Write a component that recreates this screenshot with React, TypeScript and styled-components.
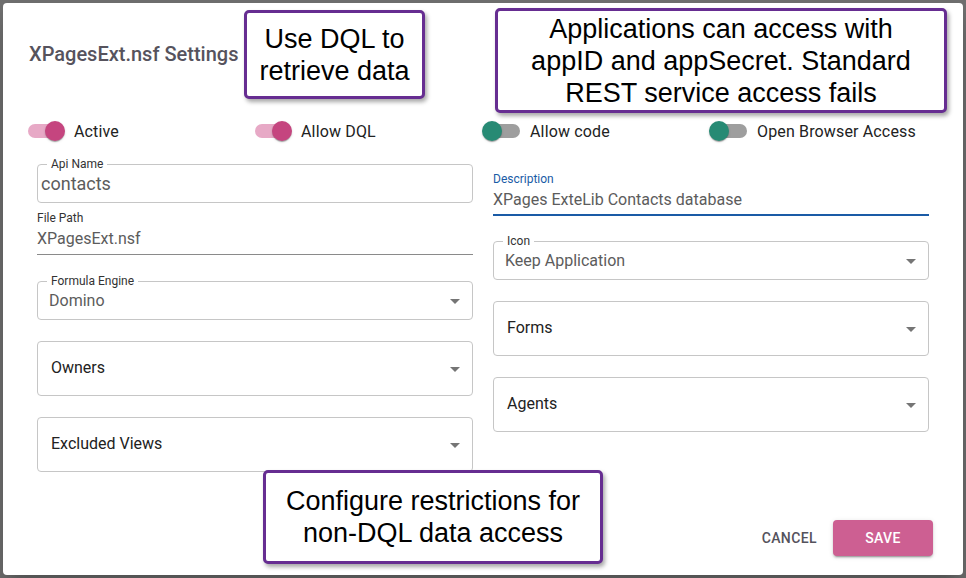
import React from "react";
import styled, { createGlobalStyle } from "styled-components";

const GlobalStyle = createGlobalStyle`
  html, body {
    margin: 0;
    padding: 0;
    background: #6f6f6f;
    font-family: Roboto, "Noto Sans", sans-serif;
  }
  * {
    box-sizing: border-box;
  }
`;

type ToggleItem = { label: string; on: boolean };

const toggles: ToggleItem[] = [
  { label: "Active", on: true },
  { label: "Allow DQL", on: true },
  { label: "Allow code", on: false },
  { label: "Open Browser Access", on: false },
];

const ArrowDrop = () => (
  <svg width="24" height="24" viewBox="0 0 24 24">
    <path d="M7 10l5 5 5-5z" fill="rgba(0,0,0,0.54)" />
  </svg>
);

const App = () => {
  return (
    <Page>
      <GlobalStyle />
      <Dialog>
        <Title>XPagesExt.nsf Settings</Title>

        <ToggleRow>
          {toggles.map((t) => (
            <ToggleCell key={t.label}>
              <Switch>
                <Track $on={t.on} />
                <Thumb $on={t.on} />
              </Switch>
              <ToggleLabel $on={t.on}>{t.label}</ToggleLabel>
            </ToggleCell>
          ))}
        </ToggleRow>

        <Fields>
          <Column>
            <Outlined $height={39}>
              <Notch>Api Name</Notch>
              <Value $big>contacts</Value>
            </Outlined>
            <Standard $mt={8}>
              <SmallLabel>File Path</SmallLabel>
              <Value>XPagesExt.nsf</Value>
            </Standard>
            <Outlined $height={39} $mt={26}>
              <Notch>Formula Engine</Notch>
              <Value>Domino</Value>
              <ArrowDrop />
            </Outlined>
            <Outlined $height={55} $mt={21}>
              <Placeholder>Owners</Placeholder>
              <ArrowDrop />
            </Outlined>
            <Outlined $height={55} $mt={21}>
              <Placeholder>Excluded Views</Placeholder>
              <ArrowDrop />
            </Outlined>
          </Column>

          <Column>
            <Standard $mt={8} $focused>
              <SmallLabel $focused>Description</SmallLabel>
              <Value>XPages ExteLib Contacts database</Value>
            </Standard>
            <Outlined $height={39} $mt={25}>
              <Notch>Icon</Notch>
              <Value>Keep Application</Value>
              <ArrowDrop />
            </Outlined>
            <Outlined $height={55} $mt={21}>
              <Placeholder>Forms</Placeholder>
              <ArrowDrop />
            </Outlined>
            <Outlined $height={55} $mt={21}>
              <Placeholder>Agents</Placeholder>
              <ArrowDrop />
            </Outlined>
          </Column>
        </Fields>

        <Footer>
          <TextButton>Cancel</TextButton>
          <SaveButton>Save</SaveButton>
        </Footer>
      </Dialog>

      <Callout $left={244} $top={10} $width={181} $height={89}>
        Use DQL to
        <br />
        retrieve data
      </Callout>
      <Callout $left={495} $top={8} $width={452} $height={105}>
        Applications can access with
        <br />
        appID and appSecret. Standard
        <br />
        REST service access fails
      </Callout>
      <Callout $left={263} $top={470} $width={340} $height={94}>
        Configure restrictions for
        <br />
        non-DQL data access
      </Callout>
    </Page>
  );
};

const Page = styled.div`
  position: relative;
  width: 966px;
  height: 578px;
  padding: 3px;
  overflow: hidden;
`;

const Dialog = styled.div`
  width: 960px;
  height: 572px;
  background: #fff;
  border-radius: 4px;
  display: flex;
  flex-direction: column;
  box-shadow: 0 11px 15px -7px rgba(0, 0, 0, 0.2),
    0 24px 38px 3px rgba(0, 0, 0, 0.14);
`;

const Title = styled.h2`
  margin: 37px 0 0 26px;
  font-size: 20px;
  font-weight: 500;
  line-height: 28px;
  color: #56535d;
`;

const ToggleRow = styled.div`
  margin-top: 49px;
  padding-left: 25px;
  display: grid;
  grid-template-columns: repeat(4, 227px);
`;

const ToggleCell = styled.div`
  display: flex;
  align-items: center;
  height: 28px;
`;

const Switch = styled.span`
  position: relative;
  width: 38px;
  height: 20px;
  flex-shrink: 0;
`;

const Track = styled.span<{ $on: boolean }>`
  position: absolute;
  left: ${(p) => (p.$on ? "0" : "3px")};
  top: 3px;
  width: 35px;
  height: 14px;
  border-radius: 7px;
  background: ${(p) => (p.$on ? "#e7a9c6" : "#9e9e9e")};
`;

const Thumb = styled.span<{ $on: boolean }>`
  position: absolute;
  top: 0;
  left: ${(p) => (p.$on ? "17px" : "0")};
  width: 20px;
  height: 20px;
  border-radius: 50%;
  background: ${(p) => (p.$on ? "#c5457f" : "#278a74")};
  box-shadow: 0 2px 1px -1px rgba(0, 0, 0, 0.2),
    0 1px 1px 0 rgba(0, 0, 0, 0.14), 0 1px 3px 0 rgba(0, 0, 0, 0.12);
`;

const ToggleLabel = styled.span<{ $on: boolean }>`
  margin-left: ${(p) => (p.$on ? "8px" : "10px")};
  font-size: 16px;
  letter-spacing: 0.15px;
  color: #222;
`;

const Fields = styled.div`
  margin-top: 19px;
  padding: 0 34px;
  display: grid;
  grid-template-columns: 1fr 1fr;
  column-gap: 20px;
`;

const Column = styled.div`
  display: flex;
  flex-direction: column;
`;

const Outlined = styled.div<{ $height: number; $mt?: number }>`
  position: relative;
  height: ${(p) => p.$height}px;
  margin-top: ${(p) => p.$mt ?? 0}px;
  border: 1px solid #c6c6c6;
  border-radius: 4px;
  padding: 0 5px 0 11px;
  display: flex;
  align-items: center;
  justify-content: space-between;
`;

const Notch = styled.span`
  position: absolute;
  left: 9px;
  top: -8px;
  padding: 0 4px;
  background: #fff;
  font-size: 12px;
  line-height: 14px;
  color: #333;
`;

const Value = styled.span<{ $big?: boolean }>`
  font-size: ${(p) => (p.$big ? "18px" : "16px")};
  margin-left: ${(p) => (p.$big ? "-8px" : "0")};
  line-height: 24px;
  color: #5c5c5c;
`;

const Placeholder = styled.span`
  margin-left: 2px;
  margin-top: -2px;
  font-size: 16px;
  line-height: 24px;
  color: #222;
`;

const Standard = styled.div<{ $mt?: number; $focused?: boolean }>`
  margin-top: ${(p) => p.$mt ?? 0}px;
  display: flex;
  flex-direction: column;
  padding-bottom: ${(p) => (p.$focused ? "2px" : "3px")};
  border-bottom: ${(p) =>
    p.$focused ? "2px solid #1a5ba6" : "1px solid #8a8a8a"};
`;

const SmallLabel = styled.span<{ $focused?: boolean }>`
  font-size: 12px;
  line-height: 14px;
  margin-bottom: 2px;
  color: ${(p) => (p.$focused ? "#1a5ba6" : "#333")};
`;

const Footer = styled.div`
  margin-top: auto;
  padding: 0 30px 19px 0;
  display: flex;
  justify-content: flex-end;
  align-items: center;
`;

const TextButton = styled.button`
  height: 36px;
  padding: 0 16px 0 17px;
  border: none;
  background: transparent;
  font-family: Roboto, sans-serif;
  font-size: 14px;
  font-weight: 500;
  letter-spacing: 0.4px;
  text-transform: uppercase;
  color: #55525c;
`;

const SaveButton = styled.button`
  width: 100px;
  height: 36px;
  border: none;
  border-radius: 4px;
  background: #cd5f92;
  color: #fff;
  font-family: Roboto, sans-serif;
  font-size: 14px;
  font-weight: 500;
  letter-spacing: 0.4px;
  text-transform: uppercase;
  box-shadow: 0 3px 1px -2px rgba(0, 0, 0, 0.2),
    0 2px 2px 0 rgba(0, 0, 0, 0.14), 0 1px 5px 0 rgba(0, 0, 0, 0.12);
`;

const Callout = styled.div<{
  $left: number;
  $top: number;
  $width: number;
  $height: number;
}>`
  position: absolute;
  left: ${(p) => p.$left}px;
  top: ${(p) => p.$top}px;
  width: ${(p) => p.$width}px;
  height: ${(p) => p.$height}px;
  display: flex;
  align-items: center;
  justify-content: center;
  text-align: center;
  background: #fff;
  border: 3px solid #662d91;
  border-radius: 5px;
  box-shadow: 2px 3px 4px rgba(0, 0, 0, 0.35);
  font-family: "Liberation Sans", Arial, sans-serif;
  font-size: 27px;
  line-height: 32px;
  color: #000;
`;

export default App;
